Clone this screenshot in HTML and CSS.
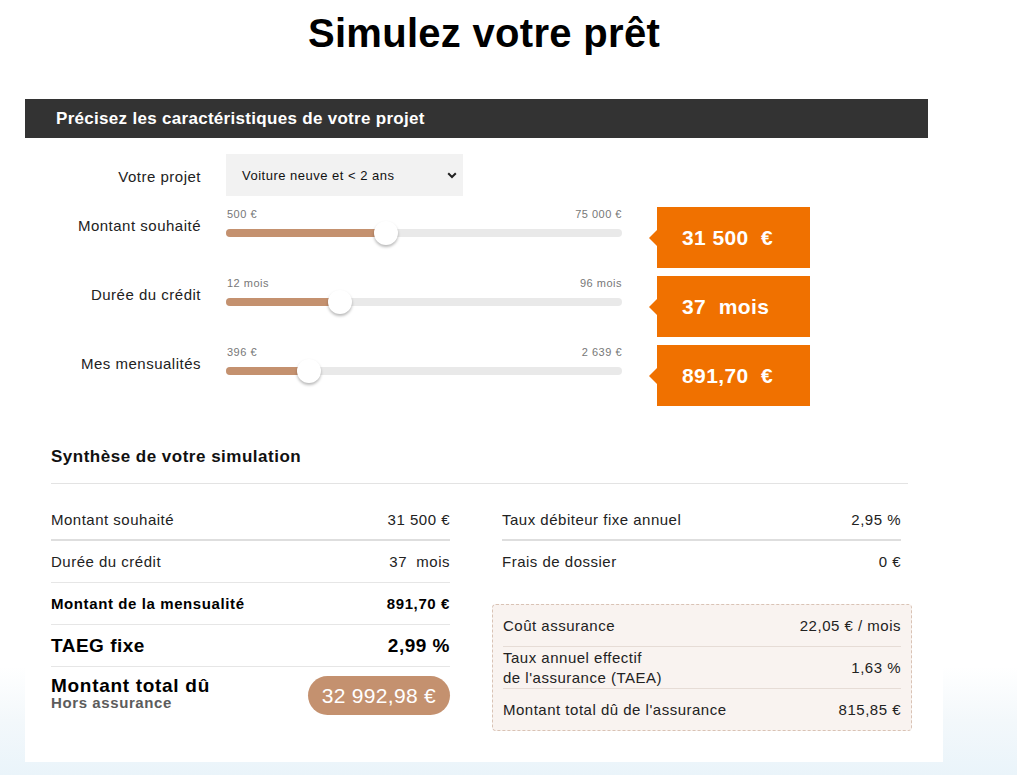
FILE: index.html
```html
<!DOCTYPE html>
<html lang="fr">
<head>
<meta charset="utf-8">
<title>Simulez votre prêt</title>
<link rel="stylesheet" href="styles.css">
</head>
<body>
<div class="page">
  <h1 class="title">Simulez votre prêt</h1>
  <div class="bar">Précisez les caractéristiques de votre projet</div>

  <div class="form">
    <div class="row row-select">
      <div class="label">Votre projet</div>
      <div class="select">
        <span>Voiture neuve et &lt; 2 ans</span>
        <svg class="chev" width="10" height="7" viewBox="0 0 10 7"><path d="M1.2 1.2 L5 5 L8.8 1.2" fill="none" stroke="#222" stroke-width="2"/></svg>
      </div>
    </div>

    <div class="row row-slider">
      <div class="label">Montant souhaité</div>
      <div class="slider">
        <div class="bounds"><span>500 €</span><span>75 000 €</span></div>
        <div class="track"><div class="fill" style="width:40.4%"><span class="thumb"></span></div></div>
      </div>
      <div class="value">31 500&nbsp; €</div>
    </div>

    <div class="row row-slider">
      <div class="label">Durée du crédit</div>
      <div class="slider">
        <div class="bounds"><span>12 mois</span><span>96 mois</span></div>
        <div class="track"><div class="fill" style="width:28.8%"><span class="thumb"></span></div></div>
      </div>
      <div class="value">37&nbsp; mois</div>
    </div>

    <div class="row row-slider">
      <div class="label">Mes mensualités</div>
      <div class="slider">
        <div class="bounds"><span>396 €</span><span>2 639 €</span></div>
        <div class="track"><div class="fill" style="width:21%"><span class="thumb"></span></div></div>
      </div>
      <div class="value">891,70&nbsp; €</div>
    </div>
  </div>

  <section class="summary">
    <h2 class="sum-title">Synthèse de votre simulation</h2>
    <div class="cols">
      <div class="col">
        <div class="line first"><span>Montant souhaité</span><span>31 500 €</span></div>
        <div class="line"><span>Durée du crédit</span><span>37&nbsp; mois</span></div>
        <div class="line strong"><span>Montant de la mensualité</span><span>891,70 €</span></div>
        <div class="line big"><span>TAEG fixe</span><span>2,99 %</span></div>
        <div class="total">
          <div class="total-label">
            <div class="total-main">Montant total dû</div>
            <div class="total-sub">Hors assurance</div>
          </div>
          <div class="pill">32 992,98 €</div>
        </div>
      </div>
      <div class="col">
        <div class="line first"><span>Taux débiteur fixe annuel</span><span>2,95 %</span></div>
        <div class="line plain"><span>Frais de dossier</span><span>0 €</span></div>
        <div class="insurance">
          <div class="ins-line"><span>Coût assurance</span><span>22,05 € / mois</span></div>
          <div class="ins-line"><span>Taux annuel effectif<br>de l'assurance (TAEA)</span><span>1,63 %</span></div>
          <div class="ins-line"><span>Montant total dû de l'assurance</span><span>815,85 €</span></div>
        </div>
      </div>
    </div>
  </section>
</div>
</body>
</html>
```

FILE: styles.css
```css
* { box-sizing: border-box; }

html, body { margin: 0; padding: 0; }

body {
  min-height: 775px;
  font-family: "Liberation Sans", Arial, sans-serif;
  color: #222;
  background: linear-gradient(180deg, #ffffff 0%, #ffffff 86%, #f3f8fb 93%, #eaf4fa 100%);
}

.page {
  width: 918px;
  margin-left: 25px;
  background: #fff;
  padding-bottom: 31px;
}

.title {
  margin: 0;
  padding-top: 9px;
  height: 99px;
  text-align: center;
  font-size: 40px;
  line-height: 48px;
  font-weight: bold;
  letter-spacing: 0.3px;
  color: #000;
}

.bar {
  width: 903px;
  height: 39px;
  background: #333;
  color: #fff;
  font-size: 17px;
  font-weight: bold;
  letter-spacing: 0.3px;
  line-height: 40px;
  padding-left: 31px;
}

.form {
  padding-top: 16px;
  display: flex;
  flex-direction: column;
  gap: 8px;
}

.row {
  display: flex;
}

.row-select {
  align-items: center;
  margin-bottom: 3px;
}

.row-select .label {
  padding-top: 3px;
}

.label {
  width: 176px;
  margin-right: 25px;
  text-align: right;
  font-size: 15px;
  letter-spacing: 0.5px;
  line-height: 20px;
}

.row-slider .label {
  padding-top: 9px;
}

.select {
  width: 237px;
  height: 42px;
  background: #f2f2f2;
  display: flex;
  align-items: center;
  justify-content: space-between;
  padding: 0 6px 0 16px;
  font-size: 13px;
  letter-spacing: 0.5px;
  color: #111;
}

.chev { display: block; }

.slider {
  width: 396px;
  padding-top: 1px;
}

.bounds {
  display: flex;
  justify-content: space-between;
  font-size: 11px;
  letter-spacing: 0.5px;
  line-height: 12px;
  color: #777;
  padding-left: 1px;
}

.track {
  margin-top: 9px;
  height: 8px;
  border-radius: 4px;
  background: #e9e9e9;
}

.fill {
  position: relative;
  height: 8px;
  border-radius: 4px 0 0 4px;
  background: #c4916f;
}

.thumb {
  position: absolute;
  right: -12px;
  top: -8px;
  width: 24px;
  height: 24px;
  border-radius: 50%;
  background: #fff;
  box-shadow: 0 2px 3px rgba(0, 0, 0, 0.28);
}

.value {
  position: relative;
  margin-left: 35px;
  width: 153px;
  height: 61px;
  background: #f07100;
  color: #fff;
  font-size: 21px;
  font-weight: bold;
  letter-spacing: 0.4px;
  line-height: 61px;
  padding-left: 25px;
}

.value::before {
  content: "";
  position: absolute;
  left: -8px;
  top: 50%;
  margin-top: -8px;
  border-right: 8px solid #f07100;
  border-top: 8px solid transparent;
  border-bottom: 8px solid transparent;
}

.summary {
  margin: 39px 35px 0 26px;
}

.sum-title {
  margin: 0;
  font-size: 17px;
  letter-spacing: 0.5px;
  line-height: 22px;
  font-weight: bold;
  color: #111;
  padding-top: 1px;
  padding-bottom: 15px;
  border-bottom: 1px solid #e3e3e3;
}

.cols {
  display: flex;
  gap: 52px;
  padding-top: 15px;
}

.col {
  width: 399px;
}

.line {
  display: flex;
  justify-content: space-between;
  align-items: center;
  height: 42px;
  border-bottom: 1px solid #e6e6e6;
  font-size: 15px;
  letter-spacing: 0.5px;
}

.line.first {
  height: 42px;
  padding-top: 1px;
  border-bottom: 2px solid #dedede;
}

.line.plain {
  height: 41px;
  border-bottom: none;
}

.line.strong {
  font-weight: bold;
  color: #000;
  letter-spacing: 0.6px;
}

.line.big {
  font-weight: bold;
  font-size: 19px;
  color: #000;
  letter-spacing: 0.5px;
}

.total {
  display: flex;
  justify-content: space-between;
  align-items: flex-start;
  padding-top: 9px;
}

.total-main {
  font-size: 19px;
  font-weight: bold;
  letter-spacing: 0.7px;
  line-height: 20px;
  color: #000;
}

.total-sub {
  font-size: 15px;
  font-weight: bold;
  letter-spacing: 0.6px;
  line-height: 14px;
  color: #5c5c5c;
}

.pill {
  height: 39px;
  padding: 0 14px;
  border-radius: 20px;
  background: #c4916f;
  color: #fff;
  font-size: 21px;
  letter-spacing: 0.3px;
  line-height: 39px;
}

.insurance {
  margin: 22px -11px 0 -10px;
  padding: 0 10px;
  background: #f9f3f0;
  border: 1px dashed #d9c3b5;
  border-radius: 4px;
}

.ins-line {
  display: flex;
  justify-content: space-between;
  align-items: center;
  height: 42px;
  border-bottom: 1px solid #e6dcd6;
  font-size: 15px;
  letter-spacing: 0.5px;
  line-height: 20px;
}

.ins-line:last-child {
  border-bottom: none;
  height: 41px;
}
```
